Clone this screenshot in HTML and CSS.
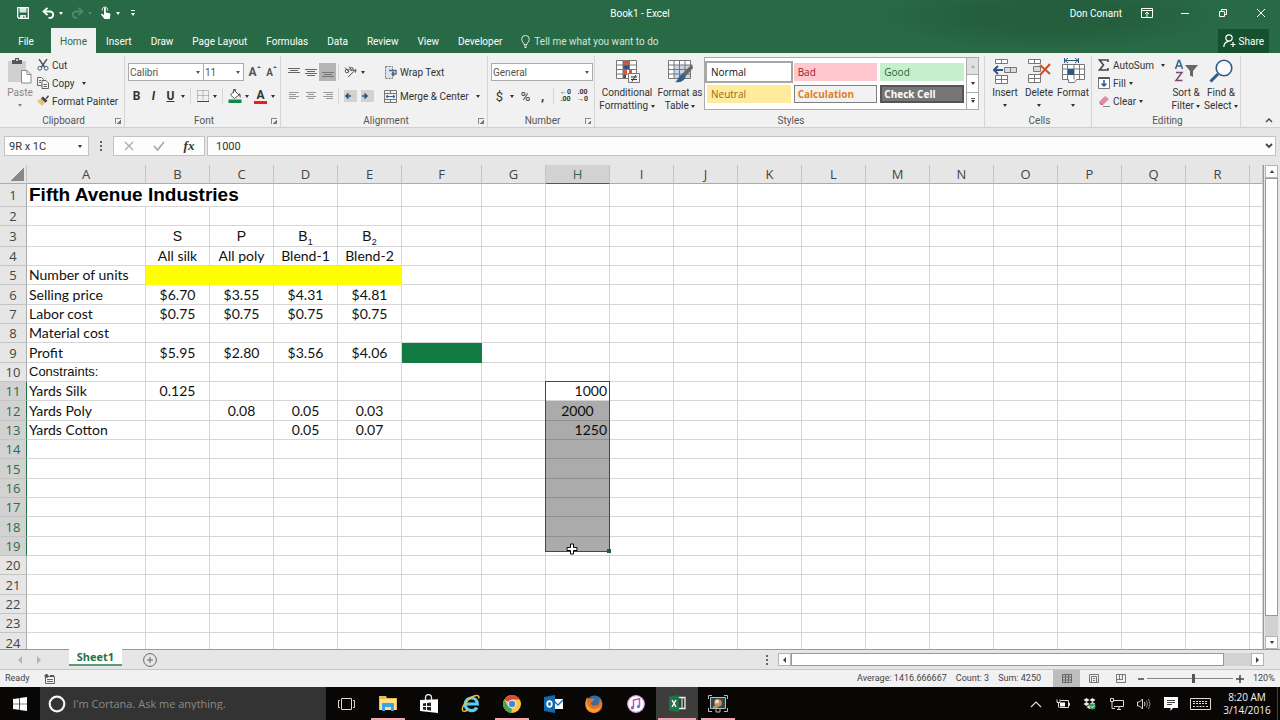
FILE: index.html
```html
<!DOCTYPE html>
<html lang="en">
<head>
    <meta charset="UTF-8">
    <meta name="viewport" content="width=device-width, initial-scale=1.0">
    <title>Book1 - Excel</title>
    <link rel="stylesheet" href="styles.css">
</head>
<body>
    <!-- Title bar and ribbon tabs -->
    <header class="header">
        <div class="titlebar">
            <div class="quick">
                <button class="quick-save" aria-label="Save"><svg width="12" height="12" viewBox="0 0 12 12"><path d="M.7.7h10.6v10.6H2L.7 10z" fill="none" stroke="#fff" stroke-width="1.3"/><path d="M2.5 1h7v4.5h-7zM3 8h6v3.5H7.5V9.500h-1.500v2H3z" fill="#fff" fill-opacity=".85"/></svg></button>
                <button aria-label="Undo"><svg width="13" height="12" viewBox="0 0 13 12"><path d="M2 4.500h6a3.200 3.200 0 0 1 0 6.400H6.500" fill="none" stroke="#fff" stroke-width="1.900"/><path d="M5.500.8 1.500 4.500l4 3.700" fill="none" stroke="#fff" stroke-width="1.800"/></svg></button>
                <i class="caret"></i>
                <button class="faded" aria-label="Redo"><svg width="13" height="12" viewBox="0 0 13 12"><path d="M11 4.500H5a3.200 3.200 0 0 0 0 6.400h1.500" fill="none" stroke="#fff" stroke-width="1.900"/><path d="m7.500.8 4 3.700-4 3.700" fill="none" stroke="#fff" stroke-width="1.800"/></svg></button>
                <i class="caret faded"></i>
                <button aria-label="Touch mode"><svg width="12" height="14" viewBox="0 0 12 14"><path d="M4 2.500c0-1.300 1.800-1.300 1.800 0v4l3.700.8c.8.200 1 .8.900 1.500L9.700 13H4.500L1.200 8.800C.8 8 1.700 7.500 2.400 8L4 9.200z" fill="#fff"/><path d="M2.300 4.500a2.700 2.700 0 1 1 5.200 0" fill="none" stroke="#fff" stroke-width=".9"/></svg></button>
                <i class="caret"></i>
                <button class="customise" aria-label="Customize toolbar"><span></span><i class="caret"></i></button>
            </div>
            <h1>Book1 - Excel</h1>
            <div class="window">
                <span class="user">Don Conant</span>
                <button aria-label="Ribbon display"><svg width="12" height="10" viewBox="0 0 12 10" fill="none" stroke="#fff"><path d="M.5.5h11v9H.5zM.5 2.500h11M6 9V4.500M4 6l2-2 2 2"/></svg></button>
                <button aria-label="Minimize"><svg width="10" height="10" viewBox="0 0 10 10"><path d="M1 5.500h8" stroke="#fff"/></svg></button>
                <button aria-label="Restore"><svg width="10" height="10" viewBox="0 0 10 10" fill="none" stroke="#fff"><path d="M1.500 3.500h5v5h-5zM3.500 3V1.500h5v5H7"/></svg></button>
                <button aria-label="Close"><svg width="10" height="10" viewBox="0 0 10 10"><path d="m1 1 8 8M9 1 1 9" stroke="#fff"/></svg></button>
            </div>
        </div>
        <nav class="tabs">
            <button class="file">File</button>
            <button class="active">Home</button>
            <button>Insert</button>
            <button>Draw</button>
            <button>Page Layout</button>
            <button>Formulas</button>
            <button>Data</button>
            <button>Review</button>
            <button>View</button>
            <button>Developer</button>
            <button class="tell"><svg width="9" height="13" viewBox="0 0 9 13" fill="none" stroke="#d5e5db"><path d="M3 9.500C3 7.500.7 6.700.7 4.200a3.800 3.800 0 0 1 7.600 0C8.300 6.700 6 7.500 6 9.500zM3 11h3M3.500 12.500h2"/></svg>Tell me what you want to do</button>
            <button class="share"><svg width="13" height="14" viewBox="0 0 13 14" fill="none" stroke="#fff" stroke-width="1.200"><circle cx="6" cy="4" r="3.200"/><path d="M.8 13c.2-3 2-5.400 5-5.600M10 8v5M7.500 10.500h5"/></svg>Share</button>
        </nav>
    </header>

    <!-- Ribbon -->
    <section class="ribbon">
        <div class="group clipboard">
            <div class="group-body">
                <button class="big paste">
                    <svg width="26" height="26" viewBox="0 0 26 26"><path d="M1 3h18v21H1z" fill="#cfcfcf"/><path d="M5 2h3V0h4v2h3v4H5z" fill="#555"/><circle cx="10" cy="2" r="1" fill="#eee"/><path d="M14.500 12.500h5.500l4 4v8.500h-9.500z" fill="#fff" stroke="#888"/><path d="M20 12.500v4h4" fill="none" stroke="#888"/></svg>
                    <span>Paste</span><i class="caret"></i>
                </button>
                <div class="stack">
                    <button class="line"><svg width="12" height="12" viewBox="0 0 12 12" fill="none"><path d="m2 0 5.500 8M10 0 4.500 8" stroke="#555" stroke-width="1.500"/><circle cx="2.800" cy="9.300" r="1.900" stroke="#3d5d86"/><circle cx="9.200" cy="9.300" r="1.900" stroke="#3d5d86"/></svg>Cut</button>
                    <button class="line"><svg width="12" height="12" viewBox="0 0 12 12" fill="#f4f4f4" stroke="#666"><path d="M.5.5h4l2 2v6h-6z"/><path d="M5 3.500h4l2.500 2.500v5.500H5z"/><path d="M6.500 7.500h3.500M6.500 9.500h3.500M2 3.500h2M2 5.500h2"/></svg>Copy<i class="caret spaced"></i></button>
                    <button class="line"><svg width="12" height="12" viewBox="0 0 12 12"><path d="m0 6 4-2.500 4 4L5 11z" fill="#e5c083"/><path d="m4 3.500 2-2 4.500 4.300-2 2z" fill="#444"/><path d="m8.500 3.300 2.500-3 1 1-2.500 3z" fill="#444"/></svg>Format Painter</button>
                </div>
            </div>
            <div class="caption">Clipboard<button class="launcher" aria-label="Clipboard settings"></button></div>
        </div>

        <div class="group font">
            <div class="group-body rows">
                <div class="row">
                    <span class="select font-name"><select aria-label="Font"><option>Calibri</option></select></span>
                    <span class="select font-size"><select aria-label="Font size"><option>11</option></select></span>
                    <button class="tool grow" aria-label="Increase font size">A<i></i></button>
                    <button class="tool grow small" aria-label="Decrease font size">A<i></i></button>
                </div>
                <div class="row">
                    <button class="tool"><b>B</b></button>
                    <button class="tool"><b><em>I</em></b></button>
                    <button class="tool"><b><u>U</u></b></button>
                    <i class="caret drop"></i>
                    <i class="sep"></i>
                    <button class="tool" aria-label="Borders"><svg width="12" height="12" viewBox="0 0 12 12" stroke="#888" stroke-dasharray="1 1"><path d="M.5.5h11v10M.5.5v10M6 .5v10M.5 5.500h11" fill="none"/><path d="M0 11.500h12" stroke="#444" stroke-dasharray="none"/></svg></button>
                    <i class="caret drop"></i>
                    <i class="sep"></i>
                    <button class="tool" aria-label="Fill color"><svg width="14" height="14" viewBox="0 0 14 14"><path d="M6.500 1.500 11 6 6.500 9.500 2.500 6z" fill="#fff" stroke="#555"/><path d="M5.500 4V.5h2V3" fill="none" stroke="#555"/><path d="M11 4c2 1 2 3 1.300 5C11.500 8 11 6.500 11 4z" fill="#38618f"/><path d="M.5 10.500h13V14H.5z" fill="#12854a"/></svg></button>
                    <i class="caret drop"></i>
                    <button class="tool font-color" aria-label="Font color">A</button>
                    <i class="caret drop"></i>
                </div>
            </div>
            <div class="caption">Font<button class="launcher" aria-label="Font settings"></button></div>
        </div>

        <div class="group alignment">
            <div class="group-body">
                <div class="rows">
                    <div class="row">
                        <button class="tool" aria-label="Top align"><svg width="12" height="12" viewBox="0 0 12 12" stroke="#666"><path d="M0 2.500h12M2 4.500h8M0 6.500h12"/></svg></button>
                        <button class="tool" aria-label="Middle align"><svg width="12" height="12" viewBox="0 0 12 12" stroke="#666"><path d="M0 3.500h12M2 5.500h8M0 7.500h12M2 9.500h8"/></svg></button>
                        <button class="tool pressed" aria-label="Bottom align"><svg width="12" height="12" viewBox="0 0 12 12" stroke="#777"><path d="M0 6.500h12M2 8.500h8M0 10.500h12"/></svg></button>
                        <i class="sep"></i>
                        <button class="tool" aria-label="Orientation"><svg width="13" height="12" viewBox="0 0 13 12" fill="none" stroke="#555"><circle cx="3" cy="5" r="1.800"/><path d="m1 1.500 4 4.500M5 .5l3 4"/><circle cx="7.500" cy="3" r="1.600"/><path d="m4 11 7.500-7M9 4.500l3-.8-.6 3"/></svg></button>
                        <i class="caret drop"></i>
                    </div>
                    <div class="row">
                        <button class="tool" aria-label="Align left"><svg width="12" height="10" viewBox="0 0 12 10" stroke="#999"><path d="M1 1.500h10M1 3.500h7M1 5.500h10M1 7.500h7"/></svg></button>
                        <button class="tool" aria-label="Center"><svg width="12" height="10" viewBox="0 0 12 10" stroke="#999"><path d="M1 1.500h10M3 3.500h6M1 5.500h10M3 7.500h6"/></svg></button>
                        <button class="tool" aria-label="Align right"><svg width="12" height="10" viewBox="0 0 12 10" stroke="#999"><path d="M1 1.500h10M4 3.500h7M1 5.500h10M4 7.500h7"/></svg></button>
                        <i class="sep"></i>
                        <button class="tool" aria-label="Decrease indent"><svg width="13" height="12" viewBox="0 0 13 12"><path d="M0 0h13v12H0z" fill="#d2d2d2"/><path d="M2 6h5M4.500 3.500 2 6l2.500 2.500" fill="none" stroke="#24507f" stroke-width="1.600"/></svg></button>
                        <button class="tool" aria-label="Increase indent"><svg width="13" height="12" viewBox="0 0 13 12"><path d="M0 0h13v12H0z" fill="#d2d2d2"/><path d="M1 6h5M3.500 3.500 6 6 3.500 8.500" fill="none" stroke="#24507f" stroke-width="1.600"/></svg></button>
                    </div>
                </div>
                <div class="rows wrap">
                    <div class="row"><button class="line"><svg width="13" height="13" viewBox="0 0 13 13"><path d="M1.500.5h7v12h-7z" fill="#dce3ea" stroke="#777" stroke-dasharray="2 1"/><path d="M5 4.500h7V8H8M10 6 8 8l2 2" fill="none" stroke="#456b91" stroke-width="1.300"/></svg>Wrap Text</button></div>
                    <div class="row"><button class="line"><svg width="13" height="13" viewBox="0 0 13 13" fill="none"><path d="M.5.5h12v12H.5zM.5 3.500h12M.5 9.500h12M6.500.5v3M6.500 9.500v3" stroke="#777"/><path d="M2 6.500h9M4 5 2 6.500 4 8M9 5l2 1.500L9 8" stroke="#38618f"/></svg>Merge &amp; Center<i class="caret spaced"></i></button></div>
                </div>
            </div>
            <div class="caption">Alignment<button class="launcher" aria-label="Alignment settings"></button></div>
        </div>

        <div class="group number">
            <div class="group-body rows">
                <div class="row"><span class="select format"><select aria-label="Number format"><option>General</option></select></span></div>
                <div class="row">
                    <button class="tool money">$</button>
                    <i class="caret drop"></i>
                    <button class="tool money">%</button>
                    <button class="tool money"><b>,</b></button>
                    <i class="sep"></i>
                    <button class="tool decimals" aria-label="Increase decimal"><span>←0</span><span>.00</span></button>
                    <button class="tool decimals" aria-label="Decrease decimal"><span>.00</span><span>→0</span></button>
                </div>
            </div>
            <div class="caption">Number<button class="launcher" aria-label="Number settings"></button></div>
        </div>

        <div class="group styles">
            <div class="group-body">
                <button class="big conditional">
                    <svg width="25" height="24" viewBox="0 0 25 24"><path d="M1.500 1.500h20v18h-20z" fill="#fff"/><path d="M8 1h6v5H8zM8 11h4v5H8z" fill="#d0563f"/><path d="M8 6h6v5H8zM8 16h3v4H8z" fill="#3b4f7b"/><path d="M14 11h3v3h-3z" fill="#d0563f"/><path d="M1.500 1.500h20v18h-20zM1.500 6h20M1.500 10.500h20M1.500 15h20M8 1.500v18M14.500 1.500v18" fill="none" stroke="#777"/><path d="M13.500 14.500h11v9h-11z" fill="#f4f4f4" stroke="#777"/><path d="M16 18h6M16 20.500h6M21 16l-4 6.500" stroke="#333"/></svg>
                    <span>Conditional<br>Formatting <i class="caret"></i></span>
                </button>
                <button class="big as-table">
                    <svg width="26" height="24" viewBox="0 0 26 24"><path d="M1.500 1.500h22v18h-22z" fill="#fff"/><path d="M7 6h16v13H7z" fill="#c9d6e4"/><path d="M1.500 1.500h22v18h-22zM1.500 6h22M1.500 10.500h22M1.500 15h22M7 1.500v18M12.500 1.500v18M18 1.500v18" fill="none" stroke="#777"/><path d="m25 5 1 4-8 9-3-3z" fill="#666"/><path d="M15 15c2 0 3.500 2 3 4-1 3-5 5-10 4 3-1 3-6 7-8z" fill="#31608f"/></svg>
                    <span>Format as<br>Table <i class="caret"></i></span>
                </button>
                <div class="gallery">
                    <div class="swatches">
                        <button class="normal">Normal</button>
                        <button class="bad">Bad</button>
                        <button class="good">Good</button>
                        <button class="neutral">Neutral</button>
                        <button class="calculation">Calculation</button>
                        <button class="check">Check Cell</button>
                    </div>
                    <div class="gallery-nav">
                        <button class="off" aria-label="Previous styles"><i class="caret up"></i></button>
                        <button aria-label="Next styles"><i class="caret"></i></button>
                        <button class="more" aria-label="More styles"><span></span><i class="caret"></i></button>
                    </div>
                </div>
            </div>
            <div class="caption">Styles</div>
        </div>

        <div class="group cells">
            <div class="group-body">
                <button class="big"><svg width="24" height="26" viewBox="0 0 24 26" fill="#fff" stroke="#777"><path d="M2.500 1.500h12v4h-12zM8.500 1.500v4M2.500 17.500h12v8h-12zM8.500 17.500v8M2.500 21.500h12"/><path d="M11.500 9.500h12v5h-12zM17.500 9.500v5" fill="#d5dce4"/><path d="M1 12h9M5 8l-4 4 4 4" fill="none" stroke="#2c5885" stroke-width="2"/></svg><span>Insert</span><i class="caret"></i></button>
                <button class="big"><svg width="24" height="26" viewBox="0 0 24 26" fill="#fff" stroke="#777"><path d="M1.500 1.500h12v4h-12zM7.500 1.500v4M1.500 16.500h12v8h-12zM7.500 16.500v8M1.500 20.500h12"/><path d="M6.500 8.500h7v5h-7z" fill="#d5dce4"/><path d="m13 7 10 9M23 6 13 17" stroke="#c9502e" stroke-width="2"/></svg><span>Delete</span><i class="caret"></i></button>
                <button class="big"><svg width="24" height="26" viewBox="0 0 24 26" fill="#fff" stroke="#777"><path d="M1.500 6.500h22v15h-8l-2 3h-6v-3h-6zM1.500 11h22M1.500 16.500h22M6.500 6.500v15M13 6.500v15M18.500 6.500v15"/><path d="M7 11h6v6H7z" fill="#2c5885" stroke="none"/><path d="M3.500 0v5M17.500 0v5M4 2.500h13M7 0 4 2.500 7 5M14 0l3 2.500L14 5" fill="none" stroke="#2c5885"/></svg><span>Format</span><i class="caret"></i></button>
            </div>
            <div class="caption">Cells</div>
        </div>

        <div class="group editing">
            <div class="group-body">
                <div class="stack">
                    <button class="line"><svg width="12" height="12" viewBox="0 0 12 12"><path d="M10 3V1H1.500l4 5-4 5H10V9" fill="none" stroke="#444" stroke-width="1.600"/></svg>AutoSum<i class="caret spaced"></i></button>
                    <button class="line"><svg width="12" height="12" viewBox="0 0 12 12"><path d="M.5.5h11v11H.5z" fill="#fff" stroke="#777"/><path d="M.5 1h11" stroke="#555" stroke-width="2"/><path d="M6 3v6M3.500 6.500 6 9l2.500-2.500" fill="none" stroke="#2c5885" stroke-width="1.500"/></svg>Fill<i class="caret"></i></button>
                    <button class="line"><svg width="12" height="12" viewBox="0 0 12 12"><path d="m1 7 6-6 4 3-6 6H3z" fill="#e58aa0"/><path d="m1 7 4 3H3z" fill="#b35b73"/><path d="M5 11.500h7" stroke="#888"/></svg>Clear<i class="caret"></i></button>
                </div>
                <button class="big sort">
                    <svg width="24" height="24" viewBox="0 0 24 24" fill="none"><path d="m1.500 10 3-8.500h1l3 8.500M2.500 7h5" stroke="#34608e" stroke-width="1.500"/><path d="M2 13.500h6l-6 8h6.500" stroke="#7c4a70" stroke-width="1.500"/><path d="M11 6h13l-5 6v6l-3-1.500V12z" fill="#666"/></svg>
                    <span>Sort &amp;<br>Filter <i class="caret"></i></span>
                </button>
                <button class="big find">
                    <svg width="24" height="24" viewBox="0 0 24 24"><circle cx="15" cy="9" r="7.800" fill="#fafafa" stroke="#2f5b8a" stroke-width="1.600"/><path d="m9 15-7.500 7.500" stroke="#2f5b8a" stroke-width="3"/></svg>
                    <span>Find &amp;<br>Select <i class="caret"></i></span>
                </button>
            </div>
            <div class="caption">Editing</div>
        </div>
        <button class="collapse" aria-label="Collapse the ribbon"><svg width="8" height="6" viewBox="0 0 8 6"><path d="m1 5 3-3 3 3" fill="none" stroke="#444" stroke-width="1.400"/></svg></button>
    </section>

    <!-- Formula bar -->
    <section class="formula-bar">
        <div class="name-box"><input type="text" value="9R x 1C" aria-label="Name box"><button aria-label="Names"><i class="caret"></i></button></div>
        <span class="dots"></span>
        <div class="entry">
            <button aria-label="Cancel"><svg width="10" height="10" viewBox="0 0 10 10"><path d="m1 1 8 8M9 1 1 9" stroke="#aaa" stroke-width="1.300"/></svg></button>
            <button aria-label="Enter"><svg width="12" height="10" viewBox="0 0 12 10"><path d="m1 5 3.500 4L11 1" fill="none" stroke="#aaa" stroke-width="1.800"/></svg></button>
            <button class="fx">fx</button>
        </div>
        <div class="formula"><input type="text" value="1000" aria-label="Formula"><button aria-label="Expand formula bar"><svg width="8" height="6" viewBox="0 0 8 6"><path d="m1 1 3 3 3-3" fill="none" stroke="#444" stroke-width="1.800"/></svg></button></div>
    </section>

    <!-- Worksheet -->
    <main class="sheet">
        <div class="grid">
            <table id="cells"></table>
        </div>
        <div class="vscroll">
            <button aria-label="Scroll up"><i class="caret up"></i></button>
            <div class="thumb"></div>
            <div class="track"></div>
            <button aria-label="Scroll down"><i class="caret"></i></button>
        </div>
    </main>

    <section class="sheet-tabs">
        <button class="nav prev" aria-label="Previous sheet"></button>
        <button class="nav next" aria-label="Next sheet"></button>
        <button class="sheet-tab">Sheet1</button>
        <button class="add" aria-label="New sheet"><svg width="14" height="14" viewBox="0 0 14 14" fill="none" stroke="#666"><circle cx="7" cy="7" r="6.400"/><path d="M7 4v6M4 7h6"/></svg></button>
        <span class="dots"></span>
        <div class="hscroll">
            <button aria-label="Scroll left"><i class="left"></i></button>
            <div class="thumb"></div>
            <div class="track"></div>
            <button aria-label="Scroll right"><i class="right"></i></button>
        </div>
    </section>

    <footer class="status">
        <span class="ready">Ready</span>
        <svg width="11" height="10" viewBox="0 0 11 10"><path d="M1.500 2.500h9v7h-9zM3 5.500h6M3 7.500h6" fill="none" stroke="#666"/><circle cx="2.500" cy="2" r="2" fill="#555"/><path d="M6 1h4v2H6z" fill="#555"/></svg>
        <div class="totals"><span>Average: 1416.666667</span><span>Count: 3</span><span>Sum: 4250</span></div>
        <div class="views">
            <button class="active" aria-label="Normal view"><svg width="10" height="9" viewBox="0 0 10 9" fill="none" stroke="#666"><path d="M.5.5h9v8h-9zM.5 3h9M.5 6h9M3.500.5v8M6.500.5v8"/></svg></button>
            <button aria-label="Page layout view"><svg width="10" height="9" viewBox="0 0 10 9" fill="none" stroke="#777"><path d="M.5.5h9v8h-9zM2.500 2.500h5v6h-5zM4 4.500h2M4 6.500h2"/></svg></button>
            <button aria-label="Page break view"><svg width="10" height="9" viewBox="0 0 10 9" fill="none" stroke="#777"><path d="M.5.5h9v8h-9zM3.500.5v5M6.500.5v5h-6"/></svg></button>
        </div>
        <button class="zoom-step" aria-label="Zoom out"><svg width="8" height="8" viewBox="0 0 8 8"><path d="M1 4h6" stroke="#444" stroke-width="1.500"/></svg></button>
        <input class="zoom" type="range" min="0" max="100" value="54" aria-label="Zoom">
        <button class="zoom-step" aria-label="Zoom in"><svg width="8" height="8" viewBox="0 0 8 8"><path d="M0 4h8M4 0v8" stroke="#444" stroke-width="1.500"/></svg></button>
        <span class="percent">120%</span>
    </footer>

    <!-- Windows taskbar -->
    <footer class="taskbar">
        <button class="start" aria-label="Start"><svg width="14" height="14" viewBox="0 0 14 14" fill="#fff"><path d="M0 2 6 1.200V6.700H0zM6.700 1.100 14 0v6.700H6.700zM0 7.300h6v5.500L0 12zM6.700 7.300H14V14l-7.300-1.100z"/></svg></button>
        <label class="cortana"><svg width="18" height="18" viewBox="0 0 18 18"><circle cx="9" cy="9" r="7.300" fill="none" stroke="#f4f4f4" stroke-width="2.200"/></svg><input type="text" placeholder="I'm Cortana. Ask me anything." aria-label="Search"></label>
        <div class="apps">
            <button aria-label="Task view"><svg width="17" height="14" viewBox="0 0 17 14" fill="none" stroke="#ddd"><path d="M3.500 1.500h10v11h-10zM2 3.500H.5v7H2M15 3.500h1.500v7H15"/></svg></button>
            <button class="open" aria-label="File Explorer"><svg width="18" height="17" viewBox="0 0 18 17"><path d="M0 1h7l1 2h10v12H0z" fill="#e9b94e"/><path d="M1 4h16v11H1z" fill="#fbe08d"/><path d="M3 9q0-1 1-1h10q1 0 1 1v7h-3v-4H6v4H3z" fill="#3aa5dc"/></svg></button>
            <button aria-label="Store"><svg width="18" height="20" viewBox="0 0 18 20"><path d="M5.500 7V3.500a3 3 0 0 1 6 0V6" fill="none" stroke="#eee" stroke-width="1.300"/><path d="m0 6 18-.8V19L0 17z" fill="#fff"/><path d="M3 9.500 6 9v3H3zM7 9l4-.5V12H7zM3 13h3v3l-3-.5zM7 13h4v3.700L7 16z" fill="#222"/></svg></button>
            <button aria-label="Internet Explorer"><svg width="19" height="19" viewBox="0 0 19 19" fill="none"><path d="M4.500 10h11.800C16 2 5 2 4.300 10c0 8 9.200 8 11.500 3.500" stroke="#5ecdf1" stroke-width="3.200"/><path d="M2 17C-1 13 9 2 15.500 1.500c3-.2 2.500 2 2 3M2 17c1 .8 3 0 5-1.200" stroke="#f2c335" stroke-width="1.400"/></svg></button>
            <button class="open" aria-label="Chrome"><svg width="18" height="18" viewBox="0 0 18 18"><circle cx="9" cy="9" r="9" fill="#f7c942"/><path d="M9 9 1.200 4.500A9 9 0 0 1 16.800 4.500H9z" fill="#d84b3c"/><path d="M9 9 8.500 18A9 9 0 0 1 1.200 4.500l4 7z" fill="#45a258"/><circle cx="9" cy="9" r="4.200" fill="#f4f4f4"/><circle cx="9" cy="9" r="3.200" fill="#4885d8"/></svg></button>
            <button aria-label="Outlook"><svg width="19" height="18" viewBox="0 0 19 18"><path d="M9 4h10v10H9z" fill="#fff"/><path d="m10 6 4 4 5-5" fill="none" stroke="#1270b8" stroke-width="1.300"/><path d="m0 2 11-2v18L0 16z" fill="#1468ad"/><ellipse cx="5.500" cy="9" rx="2.300" ry="2.900" fill="none" stroke="#fff" stroke-width="1.700"/></svg></button>
            <button aria-label="Firefox"><svg width="18" height="18" viewBox="0 0 18 18"><circle cx="9.500" cy="8.500" r="8" fill="#2f6ea8"/><path d="M2 2.500 4.500 4c2-1 4-.6 5 .5L8 6c-1 1-2 1-2 2 0 3 4 3.500 6 1.500-.6 3 3 0 2.500-6C20 9 17 18 9 18-1 17-1 8 2 2.500z" fill="#e8731f"/><path d="M2 3c-1 5 1 10 7 11 3 0 5-1 7-4-1 5-4 8-8 7.500C1 16-1 9 2 3z" fill="#f3a13b"/></svg></button>
            <button aria-label="iTunes"><svg width="18" height="18" viewBox="0 0 18 18"><circle cx="9" cy="9" r="8.300" fill="#fff" stroke="#d9a9d6" stroke-width="1.200"/><path d="M6.500 12.500V5l6-1.300v7.600" fill="none" stroke="#c658a8" stroke-width="1.500"/><circle cx="5.500" cy="12.700" r="1.700" fill="#a45bd3"/><circle cx="11.500" cy="11.500" r="1.700" fill="#4d8ee6"/></svg></button>
            <button class="open active" aria-label="Excel"><svg width="17" height="17" viewBox="0 0 17 17"><path d="M9 2.500h7v11H9z" fill="none" stroke="#e9f3ec" stroke-width="1.300"/><path d="M13 3v10" stroke="#e9f3ec"/><path d="m0 1.500 10-1.500v17L0 15.500z" fill="#207347"/><path d="m3 5 4 7M7 5l-4 7" stroke="#fff" stroke-width="1.400"/></svg></button>
            <button class="open" aria-label="Recorder"><svg width="20" height="18" viewBox="0 0 20 18"><path d="M2.500 2.500h15v11h-15z" fill="#2b4a50" stroke="#b9b9b9"/><circle cx="10" cy="8" r="3.800" fill="#e1894d"/><circle cx="9" cy="6.500" r="2" fill="#f3dfb2"/><path d="M5 11h5v2H5z" fill="#6fae6b"/><path d="M.5 4V.5H4M16 .5h3.500V4M.5 13v3.500H4M16 16.500h3.500V13M8 14v3h4v-3" fill="none" stroke="#bbb"/></svg></button>
        </div>
        <div class="tray">
            <button aria-label="Hidden icons"><svg width="12" height="8" viewBox="0 0 12 8"><path d="m1 7 5-5 5 5" fill="none" stroke="#ddd" stroke-width="1.200"/></svg></button>
            <button aria-label="Battery"><svg width="14" height="10" viewBox="0 0 14 10"><path d="M4 3.500h5v4H4z" fill="#fff"/><path d="M4.500 1.500h8v7h-9M12.500 4h1v2.500h-1M1 .5v3h3v-3M2.500 4v4.500" fill="none" stroke="#ddd"/></svg></button>
            <button aria-label="Dropbox"><svg width="13" height="12" viewBox="0 0 13 12" fill="#eee"><path d="m3.500 0 3 2-3 2-3-2zM9.500 0l3 2-3 2-3-2zM3.500 4l3 2-3 2-3-2zM9.500 4l3 2-3 2-3-2zM3.500 9l3-2 3 2-3 2z"/><circle cx="9.500" cy="8.500" r="3" fill="#3c9d56"/><path d="m8 8.500 1.200 1.200L11 7.500" fill="none" stroke="#fff"/></svg></button>
            <button aria-label="Network"><svg width="14" height="12" viewBox="0 0 14 12" fill="none" stroke="#ddd"><path d="M4 2.500h9.500v6H4M7 11.500h4M9 8.500v3M.5.500h3v3h-3zM2 3.500v7h3"/></svg></button>
            <button aria-label="Volume"><svg width="14" height="12" viewBox="0 0 14 12" fill="none" stroke="#ddd"><path d="M.5 4h2l3-3v10l-3-3h-2zM7.500 4q1 2 0 4"/><path d="M9.500 2.500q2 3.500 0 7M11.500 1q3 5 0 10" stroke="#888"/></svg></button>
            <button aria-label="Notifications"><svg width="14" height="14" viewBox="0 0 14 14"><path d="M0 0h14v11H9l-2.500 3V11H0z" fill="#fff"/><path d="M3 3.500h8M3 5.500h8M3 7.500h5" stroke="#444"/></svg></button>
            <button class="keyboard" aria-label="Keyboard"><svg width="21" height="12" viewBox="0 0 21 12" fill="none" stroke="#ddd"><path d="M.5.5h20v11H.5z"/><path d="M3 3.500h15M3 5.500h15M3 8.500h2M6.500 8.500h8M16 8.500h2" stroke-dasharray="2 1"/></svg></button>
            <button class="clock"><span>8:20 AM</span><span>3/14/2016</span></button>
        </div>
    </footer>
    <script src="script.js"></script>
</body>
</html>
```
FILE: styles.css
```css
* {
    box-sizing: border-box;
}
body {
    margin: 0;
    height: 100vh;
    display: flex;
    flex-direction: column;
    overflow: hidden;
    background-color: #e6e6e6;
    color: #333;
    font-family: Roboto, "Open Sans", sans-serif;
    font-size: 10px;
    line-height: 13px;
}
button, input, select {
    margin: 0;
    padding: 0;
    border: none;
    background: none;
    color: inherit;
    font: inherit;
    border-radius: 0;
    outline: none;
}
button {
    display: flex;
    align-items: center;
    justify-content: center;
    white-space: nowrap;
}
svg {
    display: block;
    flex: none;
}
.caret {
    display: inline-block;
    flex: none;
    border: 2px solid transparent;
    border-top: 3px solid currentColor;
    border-bottom: 0;
    vertical-align: middle;
}
.caret.up {
    border-top: 0;
    border-bottom: 3px solid currentColor;
}
.faded {
    opacity: 0.2;
}
.dots {
    width: 2px;
    height: 10px;
    background: repeating-linear-gradient(#666 0 2px, transparent 2px 4px);
}

/* Header */
.header {
    flex: none;
    color: #fff;
    background: radial-gradient(ellipse 180px 36px at 82% 30%, #245e3d 40%, transparent) #296a46;
}
.titlebar {
    display: grid;
    grid-template-columns: 1fr auto 1fr;
    align-items: center;
    height: 28px;
    padding-bottom: 2px;
}
.titlebar h1 {
    margin: 0;
    font-size: 10px;
    font-weight: normal;
}
.quick {
    display: flex;
    align-items: center;
    padding-left: 17px;
}
.quick-save {
    margin-right: 13px;
}
.quick .caret {
    margin: 0 8px 0 4px;
}
.quick .customise {
    flex-direction: column;
    gap: 2px;
    margin-left: 3px;
}
.customise span {
    width: 4px;
    height: 1px;
    background-color: #fff;
}
.customise .caret {
    margin: 0;
}
.window {
    display: flex;
    align-items: center;
    justify-content: flex-end;
}
.window button {
    width: 38px;
    height: 26px;
}
.user {
    margin-right: 6px;
}
.tabs {
    display: flex;
    height: 25px;
}
.tabs button {
    padding: 1px 9px 0 10px;
}
.tabs .file {
    width: 51px;
}
.tabs .active {
    width: 45px;
    padding: 1px 0 0;
    background-color: #f1f1f1;
    color: #2b6b48;
}
.tabs .tell {
    gap: 4px;
    color: #d5e5db;
}
.tabs .share {
    gap: 3px;
    padding: 0 5px;
    margin: 1px 11px 0 auto;
    background-color: #15512f;
}

/* Ribbon */
.ribbon {
    flex: none;
    display: flex;
    height: 75px;
    background-color: #f1f1f1;
    border-bottom: 1px solid #d0d0d0;
}
.group {
    flex: none;
    display: flex;
    flex-direction: column;
    margin-top: 3px;
    padding-left: 3px;
    border-right: 1px solid #d5d5d5;
}
.group-body {
    flex: 1;
    display: flex;
}
.caption {
    position: relative;
    height: 13px;
    text-align: center;
    color: #555;
}
.launcher {
    position: absolute;
    right: 3px;
    top: 4px;
    width: 6px;
    height: 6px;
    border-left: 1px solid #888;
    border-top: 1px solid #888;
    background: linear-gradient(135deg, transparent 60%, #777 60%);
}
.clipboard {
    width: 125px;
}
.font {
    width: 156px;
}
.alignment {
    width: 207px;
}
.number {
    width: 107px;
}
.styles {
    width: 390px;
}
.cells {
    width: 107px;
}
.editing {
    width: 149px;
}
.big {
    flex-direction: column;
    justify-content: flex-start;
    width: 34px;
    padding-top: 2px;
    line-height: 13px;
}
.big svg {
    height: 26px;
    margin-bottom: 2px;
}
.big > .caret {
    margin-top: 5px;
}
.paste {
    color: #888;
}
.stack {
    display: flex;
    flex-direction: column;
}
.line {
    gap: 3px;
    height: 18px;
    justify-content: flex-start;
}
.caret.spaced {
    margin-left: 4px;
}
.rows {
    display: flex;
    flex-direction: column;
    padding-top: 4px;
}
.row {
    display: flex;
    align-items: center;
    height: 24px;
}
.tool {
    width: 17px;
    height: 18px;
    font-size: 12px;
}
.tool.pressed {
    background-color: #b4b4b4;
}
.drop {
    margin: 0 3px 0 2px;
}
.sep {
    width: 1px;
    height: 16px;
    margin: 0 3px 0 2px;
    background-color: #d5d5d5;
}
.select {
    position: relative;
    height: 18px;
    border: 1px solid #ababab;
    background-color: #fff;
}
.select select {
    appearance: none;
    display: block;
    width: 100%;
    height: 16px;
    padding-left: 1px;
    color: #555;
}
.select::after {
    content: "";
    position: absolute;
    right: 3px;
    top: 7px;
    border: 2px solid transparent;
    border-top: 3px solid #555;
    border-bottom: 0;
}
.font-name {
    width: 76px;
}
.font-size {
    width: 40px;
    border-left: 0;
}
.format {
    width: 102px;
}
.grow {
    margin-left: 2px;
    font-weight: bold;
    color: #555;
}
.grow.small {
    font-size: 10px;
    margin-left: 0;
}
.grow i {
    align-self: flex-start;
    border: 2px solid transparent;
    border-top: 0;
    border-bottom: 2px solid #38618f;
    margin-top: 3px;
}
.font-color {
    width: 13px;
    height: 15px;
    margin: 0 2px;
    border-bottom: 3px solid #f01c1c;
    font-weight: bold;
    line-height: 12px;
}
.alignment {
    padding-left: 4px;
}
.alignment .wrap {
    margin-left: 8px;
}
.money {
    font-size: 13px;
}
.decimals {
    flex-direction: column;
    font-size: 7px;
    font-weight: bold;
    line-height: 7px;
}
.conditional {
    width: 58px;
}
.as-table {
    width: 48px;
}
.gallery {
    display: flex;
    flex: 1;
    height: 53px;
    margin: 1px 5px 0 0;
    border: 1px solid #ababab;
    background-color: #fff;
}
.swatches {
    flex: 1;
    display: grid;
    grid-template-columns: repeat(3, 1fr);
    grid-template-rows: 18px 18px;
    gap: 4px 3px;
    padding: 5px 2px 0 2px;
}
.swatches button {
    justify-content: flex-start;
    padding-left: 4px;
    font-family: "Open Sans", sans-serif;
}
.swatches .normal {
    outline: 2px solid #a6a6a6;
    color: #111;
}
.swatches .bad {
    background-color: #ffc7ce;
    color: #9c1c2b;
}
.swatches .good {
    background-color: #c6efce;
    color: #1d6b2d;
}
.swatches .neutral {
    background-color: #ffeb9c;
    color: #94671c;
}
.swatches .calculation {
    padding-left: 3px;
    border: 1px solid #7f7f7f;
    background-color: #f2f2f2;
    color: #e07f1b;
    font-weight: bold;
}
.swatches .check {
    padding-left: 2px;
    border: 2px solid #555;
    background-color: #767676;
    color: #fff;
    font-weight: bold;
}
.gallery-nav {
    width: 12px;
    display: flex;
    flex-direction: column;
}
.gallery-nav button {
    flex: 1;
    border-left: 1px solid #ababab;
    border-bottom: 1px solid #ababab;
}
.gallery-nav .off {
    background-color: #e1e1e1;
    color: #aaa;
}
.gallery-nav .more {
    flex-direction: column;
    gap: 1px;
    border-bottom: 0;
}
.more span {
    width: 4px;
    height: 1px;
    background-color: #555;
}
.editing .stack {
    width: 72px;
    padding-left: 3px;
}
.sort {
    width: 38px;
}
.find {
    width: 32px;
}
.collapse {
    align-self: flex-end;
    margin: 0 7px 4px auto;
}

/* Formula bar */
.formula-bar {
    flex: none;
    display: flex;
    align-items: center;
    height: 37px;
    padding: 0 4px 1px;
}
.name-box, .entry, .formula {
    display: flex;
    height: 20px;
    border: 1px solid #c3c3c3;
    background-color: #fdfdfd;
}
.name-box {
    width: 85px;
}
.name-box input {
    flex: 1;
    min-width: 0;
    padding-left: 4px;
    font-size: 11px;
}
.name-box button {
    width: 16px;
}
.formula-bar .dots {
    margin: 0 11px;
}
.entry {
    width: 92px;
    margin-right: 2px;
}
.entry button {
    flex: 1;
}
.entry .fx {
    font: italic bold 13px/16px "Liberation Serif", serif;
}
.formula {
    flex: 1;
}
.formula input {
    flex: 1;
    padding-left: 8px;
    font-size: 11px;
}
.formula button {
    width: 13px;
}

/* Worksheet */
.sheet {
    flex: 1;
    display: flex;
    min-height: 0;
}
.grid {
    flex: 1;
    min-width: 0;
    overflow: hidden;
    border-right: 1px solid #999;
}
.grid table {
    width: 100%;
    table-layout: fixed;
    border-spacing: 0;
    background-color: #fff;
    color: #111;
    font-family: Lato, sans-serif;
    font-size: 14px;
    line-height: 16px;
}
.col-head {
    width: 27px;
}
.col-a {
    width: 119px;
}
.col {
    width: 64px;
}
.col-f {
    width: 80px;
}
.grid tr {
    height: 19px;
}
.grid tr:nth-child(3n) {
    height: 20px;
}
.grid tr.row-1 {
    height: 23px;
}
.grid tr.row-3 {
    height: 21px;
}
.grid th, .grid td {
    padding: 0 2px;
    border-right: 1px solid #d6d6d6;
    border-bottom: 1px solid #d6d6d6;
    overflow: hidden;
    white-space: nowrap;
}
.grid th {
    padding: 0;
    border-color: #c4c4c4;
    background-color: #e6e6e6;
    font-family: "Open Sans", sans-serif;
    font-size: 13px;
    font-weight: normal;
    color: #444;
}
.grid thead th {
    border-bottom-color: #ababab;
}
.grid tbody th {
    border-right-color: #ababab;
}
.grid th.selected {
    background-color: #d2d2d2;
    color: #2b6b48;
}
.grid thead th.selected {
    border-bottom: 1px solid #217346;
}
.grid tbody th.selected {
    border-right: 1px solid #217346;
}
.grid .corner {
    background: linear-gradient(135deg, transparent 50%, #888 50%) 10px 3px / 14px 13px no-repeat #e6e6e6;
}
.center {
    text-align: center;
}
.right {
    text-align: right;
}
.grid .title {
    font: bold 19px/20px "Liberation Sans", Arial, sans-serif;
    color: #000;
}
.arial {
    font-family: "Liberation Sans", Arial, sans-serif;
    font-size: 13px;
}
.arial.center {
    font-size: 14px;
}
.arial sub {
    font-size: 9px;
    line-height: 0;
}
.grid .units {
    background-color: #ff0;
    border-color: #ff0;
}
.grid .profit {
    background-color: #127a43;
    border-color: #127a43;
}
.grid .anchor {
    position: relative;
    overflow: visible;
}
.selection {
    position: absolute;
    left: -1px;
    top: -1px;
    width: 65px;
    height: 171px;
    border: 1px solid #1a5c3d;
    background: linear-gradient(transparent 19px, rgba(0, 0, 0, 0.33) 19px);
}
.handle {
    position: absolute;
    right: -2px;
    bottom: -2px;
    width: 4px;
    height: 4px;
    background-color: #1a5c3d;
}
.pointer {
    position: absolute;
    left: 20px;
    bottom: -4px;
}
.vscroll {
    display: flex;
    flex-direction: column;
    width: 14px;
    margin: 0 1px;
}
.vscroll button, .hscroll button {
    flex: none;
    width: 13px;
    height: 13px;
    border: 1px solid #b4b4b4;
    background-color: #fdfdfd;
}
.vscroll .thumb {
    flex: 22;
    width: 13px;
    border: 1px solid #999;
    background-color: #fff;
}
.vscroll .track {
    flex: 1;
    width: 13px;
    background-color: #d2d2d2;
}

/* Sheet tabs */
.sheet-tabs {
    flex: none;
    display: flex;
    height: 21px;
    align-items: center;
    border-top: 1px solid #999;
    border-bottom: 1px solid #c6c6c6;
}
.nav {
    width: 4px;
    height: 8px;
    border: 4px solid transparent;
}
.nav.prev {
    margin-left: 14px;
    border-right-color: #b5b5b5;
}
.nav.next {
    margin: 0 24px 0 15px;
    border-left-color: #b5b5b5;
}
.sheet-tab {
    align-self: flex-start;
    width: 53px;
    height: 17px;
    margin-top: -1px;
    border-bottom: 2px solid #5e9a7b;
    background-color: #fff;
    color: #217346;
    font-family: "Open Sans", sans-serif;
    font-size: 11px;
    font-weight: bold;
}
.add {
    margin-left: 21px;
}
.sheet-tabs .dots {
    margin: 0 10px 0 auto;
}
.hscroll {
    display: flex;
    width: 38%;
    margin-right: 16px;
}
.hscroll .thumb {
    flex: 16;
    border: 1px solid #999;
    background-color: #fff;
}
.hscroll .track {
    flex: 1;
    background-color: #d2d2d2;
}
.hscroll i {
    border: 3px solid transparent;
}
.hscroll .left {
    border-right-color: #444;
    border-left: 0;
}
.hscroll .right {
    border-left-color: #444;
    border-right: 0;
}

/* Status bar */
.status {
    flex: none;
    display: flex;
    align-items: center;
    height: 17px;
    background-color: #f1f1f1;
    font-size: 9px;
    color: #444;
}
.ready {
    padding: 0 14px 0 5px;
}
.totals {
    display: flex;
    gap: 9px;
    margin: 0 12px 0 auto;
}
.views {
    display: flex;
    height: 17px;
}
.views button {
    width: 27px;
}
.views .active {
    background-color: #bdbdbd;
}
.zoom-step {
    width: 8px;
    margin-left: 3px;
}
.zoom {
    appearance: none;
    width: 86px;
    height: 1px;
    margin-left: 2px;
    background-color: #888;
}
.zoom::-webkit-slider-thumb {
    appearance: none;
    width: 3px;
    height: 9px;
    background-color: #555;
}
.percent {
    width: 36px;
    padding-left: 9px;
}

/* Taskbar */
.taskbar {
    flex: none;
    display: flex;
    height: 33px;
    background-color: #090606;
    color: #f4f4f4;
    font-family: "Open Sans", sans-serif;
}
.start {
    width: 40px;
}
.cortana {
    display: flex;
    align-items: center;
    gap: 7px;
    width: 286px;
    padding-left: 8px;
    background-color: #333;
}
.cortana input {
    flex: 1;
    font-size: 11px;
}
.cortana input::placeholder {
    color: #8a8a8a;
}
.apps {
    display: flex;
    width: 413px;
}
.apps button {
    flex: 1;
    height: 33px;
}
.apps .open {
    background: linear-gradient(#f4a3b3, #f4a3b3) center bottom / 34px 2px no-repeat;
}
.apps .active {
    background-color: #3d3d3d;
    background-size: 38px 2px;
}
.tray {
    display: flex;
    margin-left: auto;
    padding-right: 2px;
}
.tray button {
    width: 27px;
}
.tray .keyboard {
    width: 33px;
}
.tray .clock {
    flex-direction: column;
    width: 61px;
    border-right: 1px solid #444;
    line-height: 13px;
}
```
FILE: script.js
```js
const columns = 'ABCDEFGHIJKLMNOPQRS'.split('');

// Cell contents, keyed by address
const cells = {
    A1: ['Fifth Avenue Industries', 'title'],
    B3: ['S', 'center arial'], C3: ['P', 'center arial'], D3: ['B<sub>1</sub>', 'center arial'], E3: ['B<sub>2</sub>', 'center arial'],
    B4: ['All silk', 'center'], C4: ['All poly', 'center'], D4: ['Blend-1', 'center'], E4: ['Blend-2', 'center'],
    A5: ['Number of units'], B5: ['', 'units'], C5: ['', 'units'], D5: ['', 'units'], E5: ['', 'units'],
    A6: ['Selling price'], B6: ['$6.70', 'center'], C6: ['$3.55', 'center'], D6: ['$4.31', 'center'], E6: ['$4.81', 'center'],
    A7: ['Labor cost'], B7: ['$0.75', 'center'], C7: ['$0.75', 'center'], D7: ['$0.75', 'center'], E7: ['$0.75', 'center'],
    A8: ['Material cost'],
    A9: ['Profit'], B9: ['$5.95', 'center'], C9: ['$2.80', 'center'], D9: ['$3.56', 'center'], E9: ['$4.06', 'center'], F9: ['', 'profit'],
    A10: ['Constraints:', 'arial'],
    A11: ['Yards Silk'], B11: ['0.125', 'center'], H11: ['1000', 'right anchor'],
    A12: ['Yards Poly'], C12: ['0.08', 'center'], D12: ['0.05', 'center'], E12: ['0.03', 'center'], H12: ['2000', 'center'],
    A13: ['Yards Cotton'], D13: ['0.05', 'center'], E13: ['0.07', 'center'], H13: ['1250', 'right']
};

const selection = '<div class="selection"><span class="handle"></span>' +
    '<svg class="pointer" width="12" height="12" viewBox="0 0 12 12"><path d="M4.500 1h3v3.500H11v3H7.500V11h-3V7.500H1v-3h3.500z" fill="#fff" stroke="#000"/></svg></div>';

let html = '<colgroup><col class="col-head"><col class="col-a">';
columns.slice(1, 18).forEach(letter => {
    html += `<col class="${letter === 'F' ? 'col-f' : 'col'}">`;
});
html += '<col></colgroup><thead><tr><th class="corner"></th>';
columns.forEach(letter => {
    html += `<th class="${letter === 'H' ? 'selected' : ''}">${letter === 'S' ? '' : letter}</th>`;
});
html += '</tr></thead><tbody>';

for (let row = 1; row <= 24; row++) {
    html += `<tr class="row-${row}"><th class="${row >= 11 && row <= 19 ? 'selected' : ''}">${row}</th>`;
    columns.forEach(letter => {
        // The heading in A1 runs over B and C
        if (row === 1 && (letter === 'B' || letter === 'C')) {
            return;
        }
        const [text = '', style = ''] = cells[letter + row] || [];
        const span = row === 1 && letter === 'A' ? ' colspan="3"' : '';
        html += `<td class="${style}"${span}>${text}${letter + row === 'H11' ? selection : ''}</td>`;
    });
    html += '</tr>';
}
document.getElementById('cells').innerHTML = html + '</tbody>';
```
